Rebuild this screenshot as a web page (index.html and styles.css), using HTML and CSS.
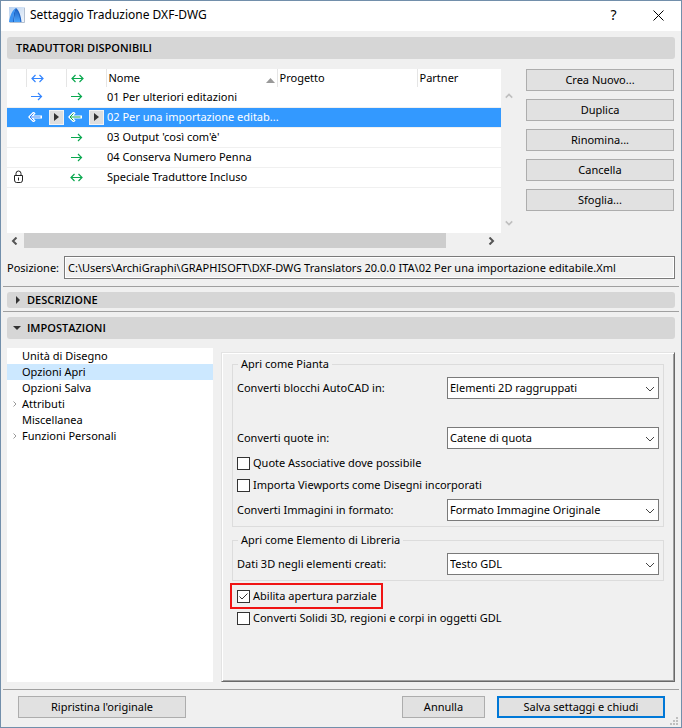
FILE: index.html
```html
<!DOCTYPE html>
<html lang="it">
<head>
<meta charset="utf-8">
<title>Settaggio Traduzione DXF-DWG</title>
<link rel="stylesheet" href="styles.css">
</head>
<body>
<svg class="defs" aria-hidden="true">
  <symbol id="both" viewBox="0 0 13 9"><path d="M1 4.500H12M4.500 1L1 4.500L4.500 8M8.500 1L12 4.500L8.500 8"/></symbol>
  <symbol id="right" viewBox="0 0 13 9"><path d="M1 4.500H11.500M8 1L11.500 4.500L8 8"/></symbol>
  <symbol id="left" viewBox="0 0 14 10"><path d="M5.500 1.500L2 5L5.500 8.500M2.500 5H12.500" stroke="#fff" stroke-width="3" stroke-linecap="square"/><path d="M5.500 1.500L2 5L5.500 8.500M2.500 5H12.500"/></symbol>
  <symbol id="play" viewBox="0 0 5 8"><path d="M0 0L5 4L0 8Z" fill="#333" stroke="none"/></symbol>
  <symbol id="chevron" viewBox="0 0 10 6"><path d="M1 1L5 5L9 1"/></symbol>
</svg>
<main class="dialog">
  <header class="titlebar">
    <svg class="logo" viewBox="0 0 16 16"><defs><linearGradient id="sky" x2="1" y2="1"><stop stop-color="#b9d2f0"/><stop offset="1" stop-color="#f4f7fb"/></linearGradient><linearGradient id="sail" x2="0" y2="1"><stop stop-color="#1c62c4"/><stop offset="1" stop-color="#4aa3fa"/></linearGradient></defs><rect width="16" height="16" fill="url(#sky)"/><path d="M4 15C4 9 5 3 7 1C10 3 12 9 12.500 15H10C9.500 11 8.500 7 7 4C6 8 5.500 12 5 15Z" fill="#1c62c4"/><path d="M5 15C5.500 9 6 5 7 2C9 5 11 10 11.500 15Z" fill="url(#sail)"/><path d="M0 15C1 9 3 3 7 1C5 5 4 10 4 15Z" fill="#3c93f2"/><path d="M15.500 1V15.500H1" fill="none" stroke="#b4c0d0"/></svg>
    <h1>Settaggio Traduzione DXF-DWG</h1>
    <button class="title-button" type="button" aria-label="Aiuto">?</button>
    <button class="title-button" type="button" aria-label="Chiudi"><svg class="close" viewBox="0 0 11 11"><path d="M.5 .5L10.500 10.500M10.500 .5L.5 10.500"/></svg></button>
  </header>

  <h2 class="section">Traduttori disponibili</h2>

  <div class="translators">
    <div class="list">
      <div class="list-view">
        <div class="table-area">
          <table>
            <colgroup><col class="c-lock"><col class="c-arrow"><col class="c-arrow"><col class="c-name"><col class="c-project"><col></colgroup>
            <thead>
              <tr>
                <th></th>
                <th><svg class="arrow blue"><use href="#both"/></svg></th>
                <th><svg class="arrow green"><use href="#both"/></svg></th>
                <th><span class="sortable">Nome <svg class="sort" viewBox="0 0 9 5"><path d="M0 5L4.500 0L9 5Z"/></svg></span></th>
                <th>Progetto</th>
                <th>Partner</th>
              </tr>
            </thead>
            <tbody>
              <tr><td></td><td><svg class="arrow blue"><use href="#right"/></svg></td><td><svg class="arrow green"><use href="#right"/></svg></td><td class="name">01 Per ulteriori editazioni</td><td></td><td></td></tr>
              <tr class="selected"><td></td><td><span class="pick"><svg class="arrow-left blue"><use href="#left"/></svg><button type="button" aria-label="Importa"><svg><use href="#play"/></svg></button></span></td><td><span class="pick"><svg class="arrow-left green"><use href="#left"/></svg><button type="button" aria-label="Esporta"><svg><use href="#play"/></svg></button></span></td><td class="name">02 Per una importazione editab...</td><td></td><td></td></tr>
              <tr><td></td><td></td><td><svg class="arrow green"><use href="#right"/></svg></td><td class="name">03 Output 'così com'è'</td><td></td><td></td></tr>
              <tr><td></td><td></td><td><svg class="arrow green"><use href="#right"/></svg></td><td class="name">04 Conserva Numero Penna</td><td></td><td></td></tr>
              <tr><td><svg class="lock" viewBox="0 0 11 14"><path d="M3 6V3.500Q3 1 5.500 1Q8 1 8 3.500V6M1.500 5.500H9.500V10Q9.500 12.500 7.500 12.500H3.500Q1.500 12.500 1.500 10ZM5.500 7.500V10.500"/></svg></td><td></td><td><svg class="arrow green"><use href="#both"/></svg></td><td class="name">Speciale Traduttore Incluso</td><td></td><td></td></tr>
            </tbody>
          </table>
        </div>
        <div class="vscroll"><svg class="flip"><use href="#chevron"/></svg><svg><use href="#chevron"/></svg></div>
      </div>
      <div class="hscroll"><svg viewBox="0 0 7 8"><path d="M5.500 .5L2 4L5.500 7.500"/></svg><span class="thumb"></span><svg viewBox="0 0 7 8"><path d="M1.500 .5L5 4L1.500 7.500"/></svg></div>
    </div>
    <div class="actions">
      <button class="btn" type="button">Crea Nuovo...</button>
      <button class="btn" type="button">Duplica</button>
      <button class="btn" type="button">Rinomina...</button>
      <button class="btn" type="button">Cancella</button>
      <button class="btn" type="button">Sfoglia...</button>
    </div>
  </div>

  <div class="location">
    <label for="path">Posizione:</label>
    <input id="path" type="text" readonly value="C:\Users\ArchiGraphi\GRAPHISOFT\DXF-DWG Translators 20.0.0 ITA\02 Per una importazione editabile.Xml">
  </div>

  <hr>
  <h2 class="section closed"><svg viewBox="0 0 4 8"><path d="M0 0L4 4L0 8Z"/></svg>Descrizione</h2>
  <hr>
  <h2 class="section open"><svg viewBox="0 0 8 4"><path d="M0 0H8L4 4Z"/></svg>Impostazioni</h2>

  <div class="settings">
    <nav>
      <ul>
        <li><a href="#unita">Unità di Disegno</a></li>
        <li class="current"><a href="#apri">Opzioni Apri</a></li>
        <li><a href="#salva">Opzioni Salva</a></li>
        <li class="parent"><svg viewBox="0 0 4 6"><path d="M.5 .5L3 3L.5 5.500"/></svg><a href="#attributi">Attributi</a></li>
        <li><a href="#misc">Miscellanea</a></li>
        <li class="parent"><svg viewBox="0 0 4 6"><path d="M.5 .5L3 3L.5 5.500"/></svg><a href="#funzioni">Funzioni Personali</a></li>
      </ul>
    </nav>
    <form class="panel">
      <fieldset>
        <legend>Apri come Pianta</legend>
        <div class="row spaced"><label for="blocks">Converti blocchi AutoCAD in:</label><span class="select"><select id="blocks"><option>Elementi 2D raggruppati</option></select><svg><use href="#chevron"/></svg></span></div>
        <div class="row"><label for="dims">Converti quote in:</label><span class="select"><select id="dims"><option>Catene di quota</option></select><svg><use href="#chevron"/></svg></span></div>
        <div class="checks">
          <label class="check"><input type="checkbox">Quote Associative dove possibile</label>
          <label class="check"><input type="checkbox">Importa Viewports come Disegni incorporati</label>
        </div>
        <div class="row"><label for="images">Converti Immagini in formato:</label><span class="select"><select id="images"><option>Formato Immagine Originale</option></select><svg><use href="#chevron"/></svg></span></div>
      </fieldset>
      <fieldset>
        <legend>Apri come Elemento di Libreria</legend>
        <div class="row"><label for="data3d">Dati 3D negli elementi creati:</label><span class="select"><select id="data3d"><option>Testo GDL</option></select><svg><use href="#chevron"/></svg></span></div>
      </fieldset>
      <label class="check highlight"><span class="tick"><input type="checkbox" checked><svg viewBox="0 0 13 13"><path d="M2.500 6.500L5 9L10.500 3.500"/></svg></span>Abilita apertura parziale</label>
      <label class="check loose"><input type="checkbox">Converti Solidi 3D, regioni e corpi in oggetti GDL</label>
    </form>
  </div>

  <hr>
  <footer>
    <button class="btn wide" type="button">Ripristina l'originale</button>
    <button class="btn cancel" type="button">Annulla</button>
    <button class="btn wide primary" type="button">Salva settaggi e chiudi</button>
    <svg class="grip" viewBox="0 0 8 8"><path d="M6 0h2v2h-2zM3 3h2v2h-2zM6 3h2v2h-2zM0 6h2v2h-2zM3 6h2v2h-2zM6 6h2v2h-2z"/></svg>
  </footer>
</main>
</body>
</html>
```
FILE: styles.css
```css
* { box-sizing: border-box; }

body {
  margin: 0;
  background: #f0f0f0;
  color: #000;
  font: 11px/16px "Noto Sans", "Open Sans", sans-serif;
}

button, input, select { font: inherit; color: inherit; }
svg { display: block; flex: none; fill: none; stroke: currentColor; }
.defs { position: absolute; width: 0; height: 0; }
a { color: inherit; text-decoration: none; }

.dialog {
  display: flex;
  flex-direction: column;
  min-height: 100vh;
  border: 1px solid #728fab;
}

.titlebar {
  display: flex;
  align-items: center;
  height: 30px;
  padding: 0 0 2px 8px;
  background: #fff;
}
.logo { width: 16px; height: 16px; stroke: none; }
h1 { flex: 1; margin: 0 0 0 5px; font-size: 12px; font-weight: 400; }
.title-button {
  display: flex;
  align-items: center;
  justify-content: center;
  width: 45px;
  height: 28px;
  padding: 0;
  border: 0;
  background: none;
  font-size: 14px;
}
.close { width: 11px; height: 11px; }

.section {
  display: flex;
  align-items: center;
  height: 22px;
  margin: 6px 6px 0;
  padding: 0 9px;
  border-radius: 3px;
  background: #d6d6d6;
  font-family: "Open Sans", "Noto Sans", sans-serif;
  font-size: 11px;
  font-weight: 600;
  text-transform: uppercase;
}
.section svg { fill: #333; stroke: none; }
.section.closed { height: 16px; margin: 5px 6px 3px; }
.section.closed svg { width: 4px; height: 8px; margin-right: 7px; }
.section.open { margin-top: 5px; padding-left: 6px; }
.section.open svg { width: 8px; height: 4px; margin-right: 6px; }

.translators { display: flex; gap: 9px; margin: 10px 7px 0 6px; }
.list { flex: 1; min-width: 0; }
.list-view { display: flex; }
.table-area { flex: 1; min-width: 0; min-height: 164px; background: #fff; }
table { width: 100%; border-collapse: collapse; table-layout: fixed; }
.c-lock { width: 19px; }
.c-arrow { width: 40px; }
.c-name { width: 171px; }
.c-project { width: 140px; }
th, td { height: 20px; padding: 0; text-align: left; font-weight: 400; white-space: nowrap; }
th { height: 18px; padding-left: 2px; border-left: 1px solid #e5e5e5; }
th:first-child { border-left: 0; }
th .arrow { margin-left: 2px; }
td { border-bottom: 1px solid #f0f0f0; }
td:first-child { padding-left: 6px; }
.name { padding-left: 1px; }
.selected { background: #3399ff; color: #fff; }
.sortable { display: flex; align-items: center; justify-content: space-between; padding-right: 2px; }
.sort { width: 9px; height: 5px; margin-top: 4px; fill: #999; stroke: none; }
.arrow { width: 13px; height: 9px; stroke-width: 1.2; }
td .arrow { margin-left: 4px; }
.arrow-left { width: 14px; height: 10px; }
.blue { color: #3385ff; }
.green { color: #0aa84f; }
.pick { display: flex; align-items: center; gap: 7px; padding-left: 2px; }
.pick button {
  display: flex;
  align-items: center;
  justify-content: center;
  width: 15px;
  height: 15px;
  padding: 0;
  border: 1px solid #f4f4f4;
  background: #dedede;
}
.pick button svg { width: 5px; height: 8px; }
.lock { width: 11px; height: 14px; color: #222; }

.vscroll {
  display: flex;
  flex-direction: column;
  justify-content: space-between;
  width: 16px;
  padding: 24px 4px 7px;
  color: #bfbfbf;
}
.vscroll svg { width: 8px; height: 6px; stroke-width: 2; }
.flip { transform: scaleY(-1); }
.hscroll {
  display: flex;
  align-items: center;
  height: 15px;
  margin-right: 22px;
  padding-left: 4px;
  color: #555;
}
.hscroll svg { width: 7px; height: 8px; stroke-width: 2; }
.thumb { flex: 1; height: 15px; margin: 0 42px 0 6px; background: #cdcdcd; }

.actions { display: flex; flex-direction: column; gap: 8px; width: 148px; }
.btn { height: 22px; padding: 0; border: 1px solid #adadad; background: #e1e1e1; text-align: center; }

.location { display: flex; align-items: center; gap: 5px; margin: 8px 6px 7px; }
.location input {
  flex: 1;
  min-width: 0;
  height: 23px;
  padding: 0 3px;
  border: 1px solid #7a7a7a;
  outline: 1px solid #fff;
  outline-offset: -2px;
  background: #f0f0f0;
}

hr { width: auto; height: 1px; margin: 0 2px; border: 0; background: #a0a0a0; }

.settings {
  display: grid;
  flex: 1;
  grid-template-columns: minmax(0, 206fr) minmax(0, 454fr);
  gap: 8px;
  margin: 9px 6px 7px;
}
nav { background: #fff; }
ul { margin: 0; padding: 0; list-style: none; }
li { display: flex; align-items: center; height: 16px; padding-left: 15px; }
.parent { gap: 5px; padding-left: 6px; }
.parent svg { width: 4px; height: 6px; color: #999; }
.current { background: #cce8ff; }
.panel {
  margin-top: 4px;
  padding: 3px 10px;
  border: 1px solid;
  border-color: #e3e3e3 #696969 #696969 #e3e3e3;
  box-shadow: inset 1px 1px #fff, inset -1px -1px #a0a0a0;
}
fieldset { min-width: 0; margin: 0; padding: 5px 4px; border: 1px solid #dcdcdc; }
fieldset + fieldset { margin-top: 5px; }
legend { margin-left: 1px; padding: 0 3px; }
.row { display: flex; align-items: center; justify-content: space-between; }
.spaced { margin-bottom: 28px; }
.select { position: relative; display: flex; width: 212px; }
.select svg {
  position: absolute;
  top: 9px;
  right: 4px;
  width: 10px;
  height: 6px;
  color: #444;
  pointer-events: none;
}
select {
  width: 100%;
  height: 22px;
  padding: 0 2px;
  appearance: none;
  border: 1px solid #7a7a7a;
  border-radius: 0;
  background: #fff;
}
.checks { margin: 3px 0; }
.check { display: flex; align-items: center; gap: 3px; height: 22px; }
.check input {
  flex: none;
  width: 13px;
  height: 13px;
  margin: 0;
  appearance: none;
  border: 1px solid #333;
  background: #fff;
}
.tick { position: relative; display: flex; }
.tick svg { position: absolute; inset: 0; width: 13px; height: 13px; color: #333; }
.highlight {
  width: max-content;
  height: 26px;
  margin: 2px 0 0 -2px;
  padding: 0 4px 0 5px;
  border: 2px solid #f01414;
}
.loose { height: 18px; padding-left: 5px; }

footer { position: relative; display: flex; gap: 12px; padding: 6px 16px 9px 17px; }
.wide { width: 168px; }
.cancel { width: 83px; margin-left: auto; }
.primary { border: 2px solid #0078d7; }
.grip { position: absolute; right: 3px; bottom: 2px; width: 8px; height: 8px; fill: #bfbfbf; stroke: none; }
```
